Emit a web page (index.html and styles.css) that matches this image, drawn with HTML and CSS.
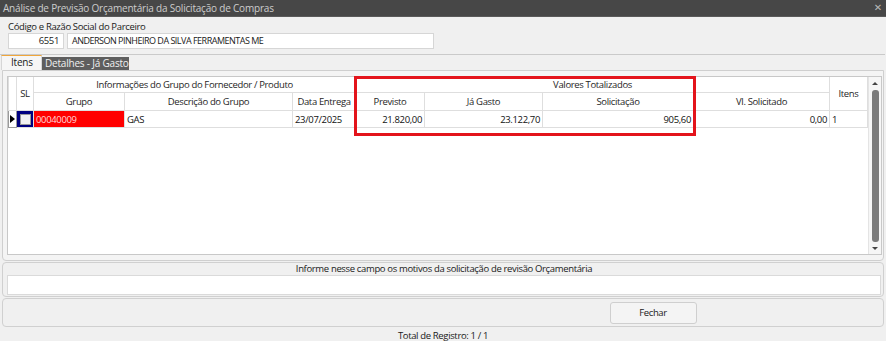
FILE: index.html
```html
<!doctype html>
<html lang="pt-BR">
    <head>
        <meta charset="UTF-8" />
        <title>Análise de Previsão Orçamentária da Solicitação de Compras</title>
        <link rel="stylesheet" href="styles.css">
    </head>
    <body>
        <div class="titlebar">
            <span>Análise de Previsão Orçamentária da Solicitação de Compras</span>
            <span class="close">✕</span>
        </div>

        <div class="partner">
            <div class="label">Código e Razão Social do Parceiro</div>
            <div class="partner-row">
                <div class="field code">6551</div>
                <div class="field name">ANDERSON PINHEIRO DA SILVA FERRAMENTAS ME</div>
            </div>
        </div>

        <div class="tabs">
            <div class="tab active">Itens</div>
            <div class="tab">Detalhes - Já Gasto</div>
        </div>

        <div class="tabpanel">
            <div class="grid">
                <div class="grid-body">
                    <table>
                        <colgroup>
                            <col style="width: 8px" />
                            <col style="width: 17px" />
                            <col style="width: 91px" />
                            <col style="width: 168px" />
                            <col style="width: 63px" />
                            <col style="width: 69px" />
                            <col style="width: 118px" />
                            <col style="width: 151px" />
                            <col style="width: 136px" />
                            <col style="width: 38px" />
                        </colgroup>
                        <thead>
                            <tr class="head1">
                                <th rowspan="2"></th>
                                <th rowspan="2">SL</th>
                                <th colspan="3">Informações do Grupo do Fornecedor / Produto</th>
                                <th colspan="4">Valores Totalizados</th>
                                <th rowspan="2">Itens</th>
                            </tr>
                            <tr class="head2">
                                <th>Grupo</th>
                                <th>Descrição do Grupo</th>
                                <th>Data Entrega</th>
                                <th>Previsto</th>
                                <th>Já Gasto</th>
                                <th>Solicitação</th>
                                <th>Vl. Solicitado</th>
                            </tr>
                        </thead>
                        <tbody>
                            <tr>
                                <td class="indicator"><span class="arrow"></span></td>
                                <td class="check"><span class="box"></span></td>
                                <td class="grupo">00040009</td>
                                <td>GAS</td>
                                <td>23/07/2025</td>
                                <td class="num">21.820,00</td>
                                <td class="num">23.122,70</td>
                                <td class="num">905,60</td>
                                <td class="num">0,00</td>
                                <td>1</td>
                            </tr>
                        </tbody>
                    </table>
                </div>
                <div class="scrollbar">
                    <span class="up"></span>
                    <span class="thumb"></span>
                    <span class="down"></span>
                </div>
            </div>
            <!-- marcação em vermelho sobre os valores -->
            <div class="highlight"></div>
        </div>

        <div class="motivo">
            <div class="motivo-label">Informe nesse campo os motivos da solicitação de revisão Orçamentária</div>
            <div class="field motivo-input"></div>
        </div>

        <div class="actions">
            <button type="button" class="btn">Fechar</button>
        </div>

        <div class="status">Total de Registro: 1 / 1</div>
    </body>
</html>
```

FILE: styles.css
```css
body {
    margin: 0;
    width: 886px;
    height: 341px;
    overflow: hidden;
    background-color: #f0f0f0;
    font-family: "Open Sans", "Noto Sans", sans-serif;
    font-size: 9.5px;
    letter-spacing: -0.35px;
    color: #1a1a1a;
}
.titlebar {
    height: 17px;
    background-color: #474747;
    color: #cdcdcd;
    font-size: 10px;
    letter-spacing: -0.2px;
    line-height: 16px;
    padding: 0 4px 0 3px;
    display: flex;
    justify-content: space-between;
    border-bottom: 1px solid #5a5a5a;
    box-sizing: border-box;
}
.close {
    color: #b8b8b8;
    font-size: 10px;
    font-family: "DejaVu Sans", sans-serif;
}
.partner {
    padding: 4px 0 6px 8px;
    border-bottom: 1px solid #cacaca;
    margin-right: 1px;
    height: 27px;
}
.label {
    line-height: 12px;
}
.partner-row {
    display: flex;
    gap: 3px;
}
.field {
    background-color: #fff;
    border: 1px solid #d6d6d6;
    height: 14px;
    line-height: 14px;
    box-sizing: content-box;
}
.code {
    width: 50px;
    text-align: right;
    padding-right: 4px;
}
.name {
    width: 361px;
    padding-left: 4px;
    font-size: 9px;
    letter-spacing: -0.5px;
}
.tabs {
    display: flex;
    align-items: flex-end;
    height: 15px;
    padding-left: 1px;
}
.tab {
    height: 13px;
    line-height: 13px;
    width: 84px;
    padding: 0 0 0 3px;
    background-color: #5e5e5e;
    color: #f0f0f0;
    font-size: 10px;
    letter-spacing: -0.2px;
}
.tab.active {
    height: 14px;
    width: 30px;
    padding: 0 0 0 9px;
    background-color: #f6f6f6;
    color: #1a1a1a;
    border-top: 1px solid #f0a63a;
    border-left: 1px solid #d6d6d6;
    border-right: 1px solid #d6d6d6;
}
.tabpanel {
    position: relative;
    margin: 0 2px 0 2px;
    height: 184px;
    padding: 5px 0 0 4px;
    border: 1px solid #cfcfcf;
    border-radius: 0 0 4px 4px;
    background-color: #f4f4f4;
}
.grid {
    display: flex;
    height: 179px;
    width: 875px;
    border: 1px solid #c8c8c8;
    background-color: #fff;
    box-sizing: border-box;
}
.grid-body {
    flex: 1;
}
table {
    border-collapse: collapse;
    table-layout: fixed;
    width: 860px;
}
th,
td {
    border: 1px solid #dedede;
    padding: 0 2px;
    font-weight: normal;
    white-space: nowrap;
    overflow: hidden;
}
th {
    color: #262626;
    text-align: center;
}
.head1 th {
    height: 15px;
    border-top: none;
}
.head2 th {
    height: 17px;
}
td {
    height: 16px;
    color: #111;
}
.num {
    text-align: right;
}
.indicator {
    padding: 0;
    border: 1px solid #9a9a9a;
}
.arrow {
    display: block;
    width: 0;
    height: 0;
    margin-left: 1px;
    border-top: 4px solid transparent;
    border-bottom: 4px solid transparent;
    border-left: 5px solid #000;
}
.check {
    padding: 0;
    background-color: #000080;
}
.box {
    display: block;
    margin: 0 auto;
    width: 9px;
    height: 9px;
    background-color: #f2f2f2;
    border: 1px solid #999;
}
.grupo {
    background-color: #ff0000;
    color: #ffd6d6;
}
.scrollbar {
    width: 15px;
    display: flex;
    flex-direction: column;
    align-items: center;
    border-left: 1px solid #e4e4e4;
    background-color: #f6f6f6;
}
.up,
.down {
    width: 0;
    height: 0;
    border-left: 3px solid transparent;
    border-right: 3px solid transparent;
}
.up {
    margin-top: 5px;
    border-bottom: 3px solid #444;
}
.down {
    border-top: 3px solid #444;
}
.thumb {
    width: 7px;
    height: 152px;
    margin: 5px 0;
    border-radius: 3px;
    background-color: #7b7b7b;
}
.highlight {
    position: absolute;
    left: 351px;
    top: 5px;
    width: 336px;
    height: 54px;
    border: 3px solid #e3141b;
}
.motivo {
    margin: 1px 2px 0 2px;
    height: 33px;
    padding: 0 2px 0 4px;
    border: 1px solid #d0d0d0;
    border-radius: 4px;
}
.motivo-label {
    text-align: center;
    line-height: 12px;
    height: 12px;
}
.motivo-input {
    height: 18px;
    border-color: #dadada;
}
.actions {
    margin: 1px 2px 0 2px;
    height: 29px;
    border: 1px solid #d0d0d0;
    border-radius: 4px;
    display: flex;
    justify-content: center;
    align-items: center;
    padding-left: 420px;
    box-sizing: border-box;
}
.btn {
    width: 87px;
    height: 22px;
    font-family: inherit;
    font-size: 9.5px;
    letter-spacing: -0.35px;
    color: #1a1a1a;
    background-color: #f4f4f4;
    border: 1px solid #cfcfcf;
    border-radius: 3px;
}
.status {
    text-align: center;
    line-height: 14px;
    margin-top: 2px;
}
```
